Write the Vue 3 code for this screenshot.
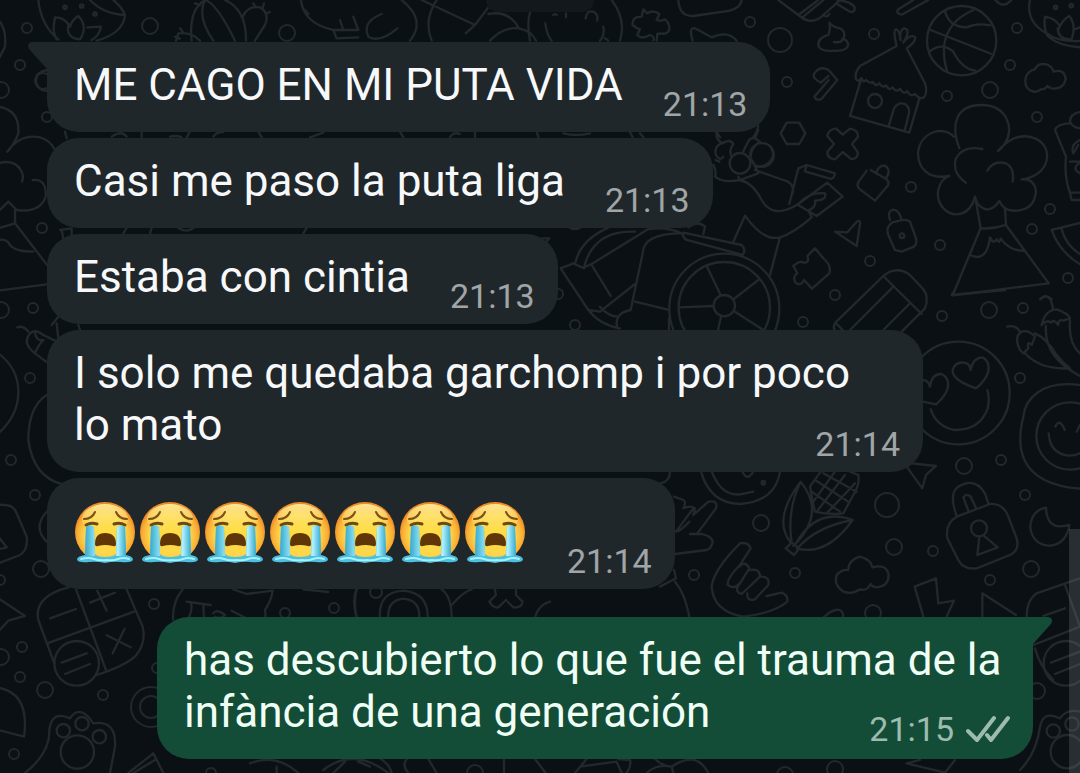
<script setup>
import { ref } from "vue"


// Messages of the conversation
const messages = ref([
  { id: 1, text: "ME CAGO EN MI PUTA VIDA", time: "21:13", out: false, tail: true },
  { id: 2, text: "Casi me paso la puta liga", time: "21:13", out: false },
  { id: 3, text: "Estaba con cintia", time: "21:13", out: false },
  { id: 4, text: "I solo me quedaba garchomp i por poco lo mato", time: "21:14", out: false },
  { id: 5, emojis: 7, time: "21:14", out: false },
  { id: 6, text: "has descubierto lo que fue el trauma de la infància de una generación", time: "21:15", out: true, tail: true },
])

// Small rings of the wallpaper: [x, y, radius]
const rings = [
  [27, 28, 5], [150, 26, 8], [287, 33, 8], [20, 65, 5], [1, 90, 8], [43, 81, 8], [47, 117, 5], [42, 228, 5],
  [750, 22, 5], [780, 40, 12], [874, 34, 5], [787, 82, 5], [1017, 28, 5], [1010, 65, 5], [990, 90, 8],
  [947, 96, 5], [1037, 117, 5], [762, 155, 12], [911, 187, 5], [1050, 209, 5], [1032, 229, 5], [940, 245, 5],
  [870, 261, 5], [835, 295, 5], [803, 322, 5], [1068, 278, 5], [558, 294, 5], [575, 325, 5],
  [942, 316, 5], [989, 310, 8], [1023, 308, 5], [1020, 378, 5], [964, 466, 8], [1001, 460, 5], [1025, 495, 5],
  [933, 551, 5], [1031, 569, 8], [990, 580, 5], [887, 505, 12], [894, 547, 8], [761, 523, 8], [694, 575, 5],
  [795, 573, 5], [873, 613, 8], [1, 310, 8], [33, 308, 5], [30, 378, 5], [11, 460, 5], [35, 495, 5], [41, 569, 8],
  [0, 580, 5], [154, 604, 5], [285, 613, 5], [334, 608, 5], [22, 647, 5], [1, 657, 8], [20, 677, 5], [45, 690, 8],
  [103, 695, 5], [14, 754, 5], [157, 668, 5], [151, 707, 20], [151, 707, 11], [211, 773, 5], [1037, 691, 8],
  [835, 769, 8], [376, 592, 6], [475, 773, 8], [785, 775, 8],
]
</script>


<template>
  <main class="chat">
    <!-- Wallpaper -->
    <svg
      class="wallpaper"
      viewBox="0 0 1080 773"
      preserveAspectRatio="xMinYMin slice"
      aria-hidden="true"
    >
      <circle
        v-for="(ring, index) in rings"
        :key="index"
        :cx="ring[0]"
        :cy="ring[1]"
        :r="ring[2]"
      />
      <!-- Top left: melon, cactus, tree -->
      <g transform="scale(.3333)">
        <path d="M115 0C120 50 140 90 175 118M340 0Q365 20 375 45Q370 100 290 122M270 0Q310 42 375 45M165 55Q155 95 170 118M165 52Q195 52 210 80Q215 60 235 48Q265 80 240 118Q200 115 204 80M262 82L303 80Q298 108 275 120M-5 60Q20 85 15 140L-5 180" />
        <path d="M575 122Q565 30 615 0M640 122Q590 50 615 0Q650 10 705 122M675 0Q740 30 738 122M728 50Q745 15 780 22Q810 40 795 75L765 122M600 122Q575 95 535 100L528 122M525 110L540 116M540 85L550 98M760 10L768 22M792 10L788 24M810 36L798 40M585 10L600 15" />
        <path d="M903 0Q910 70 1000 90L1075 90M1020 60L1030 90M1060 50L1075 90M1000 90L1010 115L1075 112M915 30L925 42" />
        <path d="M145 210Q105 215 108 245Q115 275 145 272M-5 320Q60 330 55 400Q45 430 22 455Q60 400 120 412Q150 420 165 450M-5 490Q45 475 65 515Q72 530 66 545M98 540Q140 535 137 590Q120 640 50 630L25 605L0 630M45 630L45 670L-5 685M45 670L145 800M-5 720Q20 715 30 735Q45 755 100 755M195 395L200 415M425 395V412M570 395L560 412M775 395L785 412M970 398L930 412M180 690L215 685L215 710M190 715L185 690M370 700L380 684M450 700L455 684M535 684Q560 700 580 684M910 700L920 684" />
        <circle cx="195" cy="22" r="5" /><circle cx="245" cy="18" r="5" /><circle cx="285" cy="42" r="5" />
        <path d="M335 410Q365 390 380 410M510 410Q530 405 545 412M640 410Q650 395 670 396" />
      </g>
      <!-- Top middle: faces and puzzle piece -->
      <g transform="translate(360 0) scale(.3333)">
        <path d="M125 0Q200 60 150 122M230 0Q190 60 215 122M185 0L345 75L385 22M345 75L317 100M65 42Q5 65 25 110Q60 130 112 85M385 42Q445 30 475 82M390 122Q430 80 475 85Q515 92 528 122M510 38Q500 70 510 122M755 0Q800 60 780 122M556 70Q560 105 575 122M730 80Q735 105 720 122M735 115L745 122M677 55Q680 30 698 35Q715 40 712 62M580 45Q585 38 590 45M618 40V52" />
        <path d="M850 28L862 40Q880 28 898 42L890 60Q900 65 915 58Q930 70 928 90Q920 105 905 100L892 102L890 122M850 28L845 50Q815 50 818 75Q830 85 840 88L832 105Q845 120 870 105Q885 110 880 122M955 0Q958 50 1000 48L1090 35Q1140 30 1145 0M998 122Q985 80 1005 85L1055 112Q1105 90 1130 122M120 396L130 412M270 412Q280 395 300 402M345 396V412M530 396L536 412M610 400Q650 410 690 400M810 396L818 412M840 400L850 412M1195 378Q1190 400 1180 412M1070 396L1080 412" />
      </g>
      <!-- Top right: house, ball, cloud tree, volcano -->
      <g transform="translate(760 0) scale(.3333)">
        <path d="M55 0L115 45L175 0M115 45Q155 80 190 45L235 5M130 50L190 0M190 45Q200 55 208 42M228 10L270 35Q285 40 284 22Q275 5 232 0M505 0L425 44Q405 40 415 28L460 0M706 0Q730 28 754 0M810 0Q795 70 870 105M855 50Q850 90 865 110Q900 140 965 142M865 105Q910 128 965 122M855 50Q885 55 897 75M895 90Q905 60 928 48Q950 75 935 118Q895 120 893 85M940 90L965 80" />
        <circle cx="887" cy="22" r="5" /><circle cx="934" cy="17" r="5" />
        <path d="M208 68Q212 85 205 105Q170 115 176 140Q185 155 220 152Q260 155 265 135Q262 118 250 118Q260 95 240 85Q220 82 208 68ZM248 116Q245 130 222 126" />
        <path d="M410 138L300 198Q282 220 288 238Q296 248 304 234Q310 250 318 240Q330 252 338 246Q348 262 358 250Q368 266 378 256Q388 274 398 262Q410 280 420 266Q430 285 442 274Q452 292 465 282Q480 300 492 292Q504 275 495 250L440 145M410 138Q398 90 408 88Q418 88 422 120Q415 95 432 85Q448 85 440 110L430 128Q450 100 466 112Q468 125 440 145M302 242L270 348L448 398L478 296M386 378L402 325Q415 305 435 312Q450 322 447 340L434 392" />
        <circle cx="345" cy="303" r="21" />
        <circle cx="605" cy="122" r="104" />
        <path d="M512 90L695 162M555 32Q565 80 620 82Q650 68 690 76M640 30Q560 65 552 140Q550 180 562 215M508 155Q545 125 580 155Q605 205 645 212" />
        <path d="M183 248Q155 235 163 220Q180 196 206 210L232 240L185 296Q170 305 163 290L206 240M183 248L205 228M80 368H118L136 400L118 432H80L62 400ZM228 385L248 404L270 386Q295 390 294 410L276 432L294 458Q292 480 272 476L248 456L225 478Q200 475 202 455L222 432L202 408Q205 388 228 385Z" />
        <path d="M825 208Q835 185 865 195Q880 205 880 215Q915 205 917 238Q910 270 875 265Q865 262 862 258Q855 270 842 268Q830 280 812 272Q790 260 798 230Q805 212 825 208Z" />
        <path d="M598 445C570 370 590 315 665 315C740 315 765 385 735 430Q725 445 714 453C760 400 800 405 825 415C885 440 870 530 785 538C825 535 835 570 822 600C805 640 750 635 735 625Q722 615 718 603Q685 650 652 610L645 590C630 650 580 655 550 625C520 590 535 540 568 528C500 540 474 500 474 460C480 395 550 375 582 410M667 447Q610 435 588 475Q575 520 618 548M682 512Q700 480 738 490Q765 505 758 545M648 605L662 685L578 886L866 850L738 675L735 625M662 685Q700 688 738 675M630 765Q680 790 690 712Q700 735 710 718Q718 735 722 715Q750 755 795 752" />
        <path d="M320 512L296 545Q288 558 300 568L345 602L385 555Q388 545 380 538L332 510M348 520Q355 495 375 497Q395 510 378 535M395 668L385 680Q380 690 385 705L405 750L425 755L462 740Q472 732 468 715L450 665Q440 658 428 660ZM390 660Q380 635 400 629Q418 630 424 658" />
        <circle cx="426" cy="707" r="7" />
        <path d="M225 695L262 697L292 664Q302 660 300 672L290 738ZM165 745L142 768Q150 790 130 788Q120 780 100 798L112 820Q95 830 108 850Q125 858 132 840L156 866L208 820Q215 795 190 775Z" />
        <path d="M965 335Q930 340 930 365Q940 385 965 385M930 370Q890 372 885 390L918 470Q912 530 930 578L935 600H965M930 485H965M960 420Q930 435 940 460L955 435M965 485Q930 505 960 520M930 578H965M965 668L875 690Q900 760 965 795M905 688Q920 740 965 765M840 898Q858 880 875 898" />
      </g>
      <!-- Wheelchair with person, pencil -->
      <g transform="translate(540 130) scale(.3333)">
        <circle cx="600" cy="100" r="31" />
        <circle cx="553" cy="527" r="32" />
        <circle cx="553" cy="536" r="165" />
        <circle cx="553" cy="533" r="137" />
        <path d="M500 408L542 495M655 450L580 508M585 545L670 600M543 560L534 600M520 528L418 532M530 0Q525 30 548 40Q570 25 580 42Q565 60 575 80M528 75Q520 50 548 38M528 75Q540 95 550 80M527 90L538 95M520 105Q530 120 525 140Q550 160 600 150M655 0L645 25Q630 20 622 40L608 68M645 25L660 35Q635 50 632 78M660 40Q695 35 700 75Q690 110 650 110M632 85Q650 115 655 130M655 130L600 150M595 140L600 150M645 120L730 150Q765 160 758 190M600 150Q640 160 665 210Q700 270 775 222L862 158L908 200L830 258L775 225M815 262Q760 310 720 322Q670 335 615 257L580 335M720 322L690 435M775 115L748 222M775 115L800 105L885 130Q882 148 870 146L795 124L800 105M780 218Q810 185 855 190Q862 210 825 212Q830 230 805 242L815 262M430 308L605 345Q620 360 608 375L440 330Q425 320 430 308ZM445 292Q475 270 495 290L490 312M205 293Q120 330 105 402M285 305Q160 300 132 412L155 402M330 297Q380 290 425 310Q310 310 308 370Q285 480 272 540M155 402L325 297M62 415L100 400L132 415M62 415L145 540L180 545L285 462M155 405L212 498M145 540Q180 585 240 595M180 530Q205 560 235 560M285 515L387 540M272 540Q220 550 232 595M387 565V600M90 293Q105 302 120 293M5 325H28L10 345" />
        <path d="M885 602Q878 590 886 578L1030 438Q1070 405 1110 435L1150 478Q1168 500 1155 535L1085 605M1030 438L1145 552M1058 472L930 600M1108 522L1030 600M886 578L910 602" />
      </g>
      <!-- Right: smiling faces, peppers, padlock, moon -->
      <g transform="translate(900 290) scale(.3333)">
        <circle cx="175" cy="309" r="154" />
        <path d="M228 295Q155 270 158 240Q168 210 200 220Q210 225 212 240Q220 200 250 203Q270 215 265 245Q255 275 228 295ZM68 270Q85 270 90 290Q95 250 125 252Q150 265 143 295Q135 320 108 343L68 335M92 358Q110 410 165 420Q240 420 263 355Q270 325 262 300M155 15L315 0M155 15L165 0" />
        <path d="M425 25Q435 10 452 28L460 58M425 105Q435 60 470 58Q505 70 510 85L490 92Q475 85 475 105Q460 85 455 98Q440 88 425 105M438 108Q430 200 540 258M510 92Q505 160 540 190M322 110Q340 105 352 115L362 128M360 180Q340 140 365 125Q385 118 405 140L395 165Q380 150 385 175L370 190L360 180M405 130Q440 145 470 195Q490 220 510 235Q420 240 375 190M540 285C420 270 375 330 370 380C350 460 345 580 540 596" />
        <circle cx="510" cy="438" r="101" />
        <path d="M446 430Q450 490 505 497Q525 497 540 490M466 410Q480 382 494 420M530 425L540 405" />
        <path d="M438 653C395 660 385 705 395 730C415 785 500 780 508 705Q440 725 438 653ZM170 678Q145 610 175 590Q225 560 255 610L265 640M205 662L190 622Q200 608 212 620L228 654M170 680L270 642Q310 640 325 680L350 745Q360 780 330 795L230 835Q190 840 175 810L142 745Q135 700 170 680ZM293 772L232 795L238 740M252 738L293 772M20 530L67 595L78 555L108 528L35 520M70 980L44 890L108 865L115 940L162 932L140 980M247 980V910L348 975M380 980Q380 930 410 910L540 865M430 978L495 955M495 885L540 1010" />
        <circle cx="237" cy="715" r="24" />
      </g>
      <!-- Lower middle: corn, hand, cloud -->
      <g transform="translate(660 460) scale(.3333)">
        <path d="M123 35Q150 130 240 132Q345 125 360 35M155 35Q185 110 240 103L280 95M248 35Q260 65 278 38M0 70Q30 65 30 35M377 265L402 285L418 265L395 248ZM393 248Q335 180 422 65Q500 160 400 258M422 65Q380 150 395 248M410 265Q500 290 578 180Q470 140 408 250M578 180Q470 200 415 262M450 80L482 35M450 80Q455 110 465 155M465 155Q510 165 550 160L580 105Q600 75 595 45L570 35M465 60L565 125M455 95L540 155M490 40L590 95M470 155L555 45M460 125L525 35M500 160L585 70" />
        <circle cx="310" cy="68" r="5" />
        <path d="M42 110L70 120Q80 125 70 145Q90 135 105 145L100 165L145 125Q175 120 168 145L112 220Q155 225 158 245Q155 265 140 270L45 282M100 145L48 215Q60 215 88 185M90 222H120M42 330L48 355L0 380M45 365Q75 400 88 470M250 470Q160 455 155 380Q160 330 240 250Q265 245 272 265L240 315Q200 355 203 375Q220 390 240 370L268 325Q255 300 238 320M240 370Q220 395 245 402L300 350Q300 325 270 330M262 400Q260 425 285 418L325 375Q330 350 305 350M320 408L365 398Q385 405 382 425Q340 460 250 470M490 472Q540 430 550 465L548 472" />
        <path d="M565 330Q565 300 600 290Q635 300 637 322Q680 310 686 345Q685 380 650 382Q635 380 632 372Q620 395 600 388Q575 405 550 395Q520 375 530 345Q545 328 565 330Z" />
      </g>
      <!-- Bottom left: calculator, paw -->
      <g transform="translate(0 560) scale(.3333)">
        <path d="M205 82Q100 110 115 180L163 310M228 88L318 330M380 88L428 200Q440 250 405 290Q370 320 290 345M142 250L402 155M150 175L228 147M270 128L345 98M292 92L320 152M320 226L392 262M338 280L374 206M185 308L260 280M195 342L270 312M-5 115L75 168L25 182L-5 215M-5 383Q90 400 72 530L-5 510M75 639Q150 580 148 510Q155 450 210 475Q240 430 280 490Q350 480 345 560L330 639M385 639L460 580L490 639M400 639L465 600M548 88Q515 130 520 180M560 125L632 135M572 128Q580 150 563 178M610 135L612 178M640 160Q650 145 675 165Q660 180 645 170M695 152L745 178M700 88L740 102L818 92Q815 120 795 150L797 175M910 88L985 96M1070 88Q1060 130 1070 175M750 610Q830 580 895 639M970 630Q1060 560 1165 639M1000 639L1035 605M1075 605L1110 620M830 620V639" />
        <circle cx="230" cy="310" r="67" /><circle cx="190" cy="512" r="20" /><circle cx="246" cy="491" r="20" />
        <circle cx="298" cy="530" r="20" /><circle cx="232" cy="576" r="50" />
      </g>
      <g transform="translate(0 220) scale(.3333)">
        <path d="M-5 212L140 193M52 322Q70 315 85 335M105 400Q65 370 90 340Q105 325 130 345L165 362M105 340Q110 365 130 360Q115 375 105 400L138 425M155 315L175 290M170 310L175 355M235 315L240 330M-5 400C75 460 75 570 -5 640M140 525Q85 560 85 660Q100 770 185 792M-5 855Q40 850 50 880L80 950Q85 990 60 1005L-5 1030M-5 950L20 982L-5 988M145 870Q95 920 140 965" />
      </g>
      <!-- Strips around the outgoing message -->
      <g transform="translate(150 580) scale(.3333)">
        <path d="M620 28Q605 60 620 112M875 28Q905 50 905 112M905 75Q940 35 965 28M690 112Q685 35 762 32Q835 40 833 112M715 112Q712 60 762 56Q810 62 808 112M1035 30L1038 45L1018 65Q1030 85 1045 82L1068 60L1090 82Q1115 85 1118 65L1098 45V30M1155 112Q1165 75 1200 65" />
      </g>
      <g transform="translate(380 745) scale(.3333)">
        <path d="M0 40Q30 60 35 84M80 42Q65 60 85 84M145 42L170 84M372 42V84M465 42L497 84M585 84L620 42M605 64L710 50L725 84M715 42L750 45Q755 65 740 84M800 84Q830 55 875 65L880 84M825 42Q850 65 875 65Q950 15 985 84" />
      </g>
      <g transform="translate(820 600) scale(.3333)">
        <path d="M640 135L780 80M645 145Q660 200 700 240M693 188L780 155M705 222L780 192M600 510Q650 460 660 380Q670 330 720 355Q740 325 780 335M260 490L375 518L405 480M260 490L300 480" />
        <circle cx="738" cy="190" r="67" /><circle cx="700" cy="393" r="20" /><circle cx="756" cy="372" r="20" /><circle cx="742" cy="455" r="50" />
      </g>
    </svg>

    <div class="day-chip" />

    <!-- Conversation -->
    <ol class="messages">
      <li
        v-for="message in messages"
        :key="message.id"
        class="bubble"
        :class="{ 'bubble-out': message.out, 'bubble-emoji': message.emojis }"
      >
        <svg
          v-if="message.tail"
          class="tail"
          viewBox="0 0 52 27"
          aria-hidden="true"
        >
          <path d="M0 0H47Q52 0 52 4Q52 6 50 8L33 27H0Z" />
        </svg>
        <span
          v-if="message.emojis"
          class="emojis"
        >
          <svg
            v-for="n in message.emojis"
            :key="n"
            class="emoji"
            viewBox="0 0 60 61"
            role="img"
            aria-label="😭"
          >
            <defs>
              <radialGradient
                :id="`face-${n}`"
                cx=".5"
                cy=".55"
                r=".52"
              >
                <stop offset="0" stop-color="#ffdf3e" />
                <stop offset=".65" stop-color="#fdd64a" />
                <stop offset=".88" stop-color="#f9ae35" />
                <stop offset="1" stop-color="#ee8a26" />
              </radialGradient>
              <linearGradient
                :id="`shine-${n}`"
                x2="0"
                y2="1"
              >
                <stop offset="0" stop-color="#fff0a0" stop-opacity=".9" />
                <stop offset="1" stop-color="#ffe36a" stop-opacity="0" />
              </linearGradient>
              <linearGradient :id="`tear-${n}`">
                <stop offset="0" stop-color="#35a9cf" />
                <stop offset=".3" stop-color="#a5eefb" />
                <stop offset=".6" stop-color="#6fd6ef" />
                <stop offset=".8" stop-color="#b0f2fd" />
                <stop offset="1" stop-color="#35a9cf" />
              </linearGradient>
            </defs>
            <circle cx="30" cy="30" r="30" :fill="`url(#face-${n})`" />
            <ellipse cx="30" cy="17" rx="23" ry="15" :fill="`url(#shine-${n})`" />
            <path class="brow" d="M9 17Q17 17 20 10M52 17Q44 17 41 10" />
            <path class="lid" d="M11 23Q16 20 22 22M50 23Q45 20 39 22" />
            <path class="mouth" d="M20 42Q20 31 30 31Q41 31 41 42Q41 45 38 44Q30 42 23 44Q20 45 20 42Z" />
            <path d="M2 57Q3 54 10 53L11 25Q15 22 19 25L20 52Q22 55 30 55Q39 55 41 52L42 25Q46 22 50 25L51 53Q57 54 58 57Q58 61 46 60Q38 59 30 61Q22 59 14 60Q2 61 2 57Z" fill="#4cc0df" />
            <path d="M10 54L11 25Q15 22 19 25L20 54ZM41 54L42 25Q46 22 50 25L51 54Z" :fill="`url(#tear-${n})`" />
            <path class="splash" d="M6 57Q14 55 19 57T32 58Q38 59 43 57T54 57" />
          </svg>
        </span>
        <template v-else>
          {{ message.text }}
        </template>
        <span class="meta">
          <time>{{ message.time }}</time>
          <svg
            v-if="message.out"
            class="ticks"
            viewBox="0 0 44 28"
            role="img"
            aria-label="Entregado"
          >
            <path d="M2 16L11 25L28 3M21 20L25 25L42 3" />
          </svg>
        </span>
      </li>
    </ol>

    <div class="scrollbar" />
  </main>
</template>


<style>
body {
  margin: 0;
  background-color: #0b1014;
}
</style>

<style scoped>
.chat {
  position: relative;
  box-sizing: border-box;
  min-height: 100vh;
  overflow: hidden;
  background-color: #0b1014;
  font-family: Roboto, "Noto Sans", sans-serif;
}

.wallpaper {
  position: absolute;
  inset: 0;
  width: 100%;
  height: 100%;
  fill: none;
  stroke: #22282c;
  stroke-width: 2;
  stroke-linejoin: round;
  stroke-linecap: round;
}

.wallpaper g {
  stroke-width: 7;
}

/* Date label sliding out at the top */
.day-chip {
  position: relative;
  width: 108px;
  height: 12px;
  margin: 0 auto;
  border-radius: 0 0 16px 16px;
  background-color: #12181c;
}

.messages {
  position: relative;
  display: flex;
  flex-direction: column;
  align-items: flex-start;
  gap: 6px;
  margin: 0;
  padding: 30px 47px 14px;
  list-style: none;
}

.bubble {
  position: relative;
  display: flow-root;
  box-sizing: border-box;
  max-width: calc(100% - 110px);
  padding: 17px 30px 8px 27px;
  border-radius: 32px;
  background-color: #20272b;
  color: #f7f8fa;
  font-size: 44px;
  line-height: 52px;
}

.bubble:first-child {
  border-top-left-radius: 0;
}

.bubble-out {
  align-self: flex-end;
  margin-top: 22px;
  border-top-right-radius: 0;
  background-color: #144d37;
  color: #f0fff6;
}

.tail {
  position: absolute;
  top: 0;
  left: -19px;
  width: 52px;
  height: 27px;
  fill: #20272b;
  transform: scaleX(-1);
}

.bubble-out .tail {
  right: -19px;
  left: auto;
  fill: #144d37;
  transform: none;
}

/* Time sits closer to the edge than the text */
.meta {
  display: flex;
  float: right;
  align-items: center;
  gap: 12px;
  margin: 25px -7px 0 40px;
  color: #a0a5a8;
  font-size: 34px;
  line-height: 40px;
}

.bubble-out .meta {
  margin-top: 23px;
  margin-bottom: 2px;
  color: #9dbbae;
}

.ticks {
  width: 44px;
  height: 28px;
  fill: none;
  stroke: currentColor;
  stroke-width: 4;
  stroke-linecap: round;
  stroke-linejoin: round;
}

.bubble-emoji {
  display: flex;
  align-items: flex-end;
  padding-top: 24px;
  padding-left: 28px;
}

.bubble-emoji .meta {
  margin-top: 39px;
  margin-left: 42px;
}

.emojis {
  display: flex;
  gap: 5px;
  align-self: flex-start;
}

.emoji {
  width: 60px;
  height: 61px;
}

.brow,
.lid,
.splash {
  fill: none;
  stroke: #7a5216;
  stroke-width: 2;
  stroke-linecap: round;
}

.lid {
  stroke: #6b4a14;
  stroke-width: 3;
}

.splash {
  stroke: #a8f0fb;
}

.mouth {
  fill: #613606;
}

.scrollbar {
  position: absolute;
  right: 0;
  bottom: 0;
  width: 11px;
  height: 244px;
  background-color: rgba(120, 128, 134, .28);
}
</style>
